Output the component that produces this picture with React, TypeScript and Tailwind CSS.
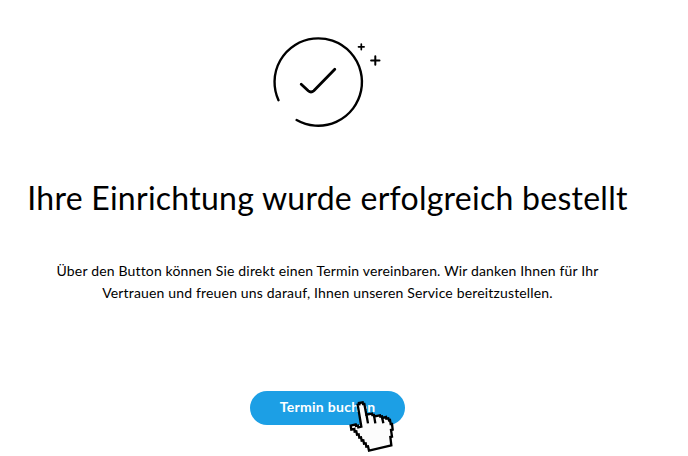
function SuccessIcon() {
  return (
    <svg
      className="ml-[264px] h-[106px] w-[130px]"
      viewBox="264 28 130 106"
      fill="none"
      stroke="black"
      strokeWidth="2.4"
      strokeLinecap="round"
      strokeLinejoin="round"
      aria-hidden="true"
    >
      <path d="M278.5 100.2A43.7 43.7 0 1 1 296.6 120" />
      <path strokeWidth="2.8" d="M301.2 84.3L308.2 90.8Q311 93.2 313.8 90.8L334.8 69.3" />
      <path strokeWidth="1.7" d="M361.3 44v5.6M358.5 46.8h5.6" />
      <path strokeWidth="2" d="M375.3 56.3v8.4M371.1 60.5h8.4" />
    </svg>
  );
}

function HandCursor() {
  return (
    <svg className="absolute left-[90px] top-[5px] h-[60px] w-[60px]" viewBox="0 0 180 180" aria-hidden="true">
      <path
        fill="#fcfcfc"
        stroke="black"
        strokeWidth="7"
        strokeLinejoin="miter"
        d="M53 26L58 25L57 21L68 19L69 24L73 24L79 56L96 53L97 57L102 57L103 61L120 58L121 62L126 61L127 66L138 63L139 68L145 67L147 73L150 72L152 84L156 84L158 101L153 102L156 122L151 123L154 148L87 164L84 151L79 152L77 142L72 143L70 133L65 134L63 124L58 125L56 115L51 116L49 106L44 107L43 99L34 101L32 89L47 85L48 90L54 89L55 94L64 92Z"
      />
      <path fill="none" stroke="black" strokeWidth="7" d="M79 54L84 82M102 58L106 82M126 63L130 82" />
    </svg>
  );
}

export default function App() {
  return (
    <main className="h-[456px] w-[688px] overflow-hidden bg-white pt-7 font-['Lato',sans-serif] text-black">
      <SuccessIcon />
      <div className="flex w-[655px] flex-col items-center">
        <h1 className="mt-11 whitespace-nowrap text-[32px] leading-10 tracking-[0.26px]">
          Ihre Einrichtung wurde erfolgreich bestellt
        </h1>
        <p className="mt-[42px] whitespace-nowrap text-center text-sm leading-[22px] tracking-[0.165px]">
          Über den Button können Sie direkt einen Termin vereinbaren. Wir danken Ihnen für Ihr
          <br />
          Vertrauen und freuen uns darauf, Ihnen unseren Service bereitzustellen.
        </p>
        <div className="relative mt-[87px]">
          <button className="block h-[34px] w-[155px] cursor-pointer rounded-full bg-[#1c9fe5] pb-0.5 text-sm font-bold tracking-[0.3px] text-white">
            Termin buchen
          </button>
          <HandCursor />
        </div>
      </div>
    </main>
  );
}
